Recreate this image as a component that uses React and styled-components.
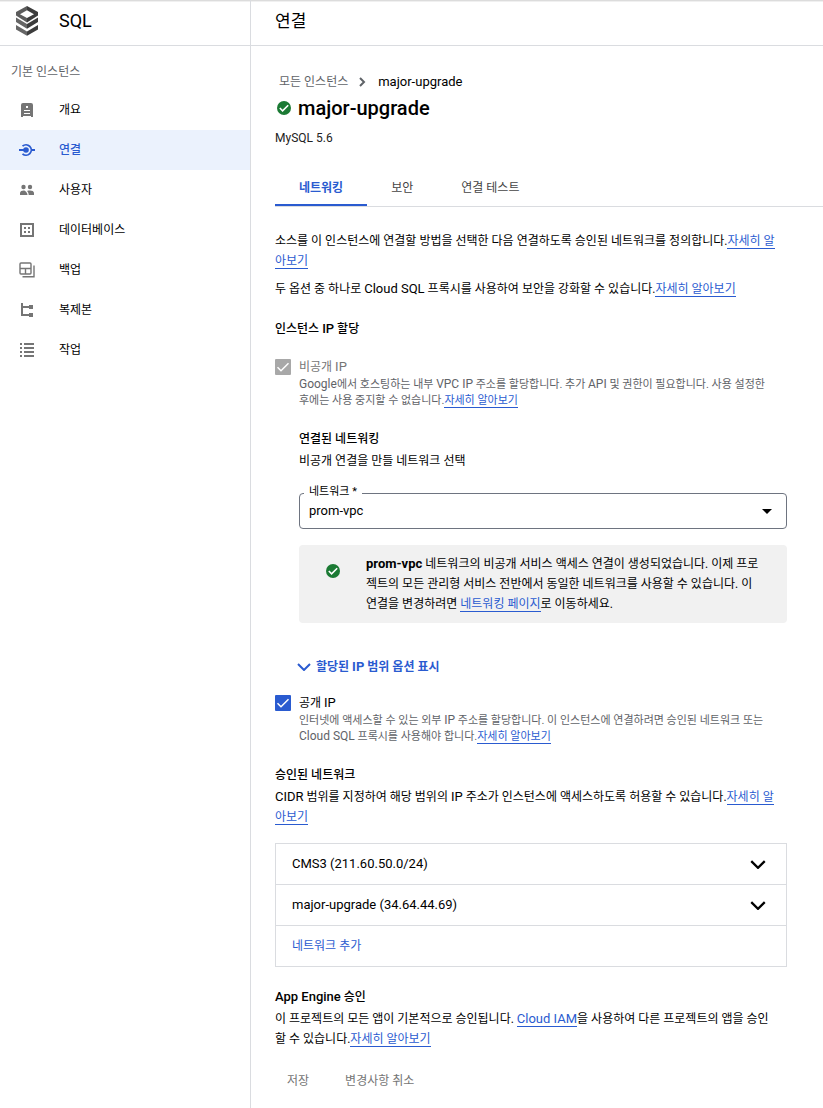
import React, { useState } from 'react';
import styled, { createGlobalStyle } from 'styled-components';

const GlobalStyle = createGlobalStyle`
  *, *::before, *::after { box-sizing: border-box; }
  body {
    margin: 0;
    background: #fff;
    color: #000;
    font-family: Roboto, "Noto Sans CJK KR", sans-serif;
    font-size: 12px;
    line-height: 20px;
  }
  button, select, input { font: inherit; color: inherit; }
`;

const blue = '#2a5bd0';
const line = '#dadce0';

const Shell = styled.div`
  display: grid;
  grid-template-columns: 251px minmax(0, 1fr);
  min-height: 100vh;
  box-shadow: inset 0 1px 0 #dcdcdc, inset 0 2px 0 #f0f0f0;
`;

const Sidebar = styled.aside`
  border-right: 1px solid ${line};
`;

const Bar = styled.header`
  display: flex;
  align-items: center;
  gap: 20px;
  height: 46px;
  padding: 0 ${(p) => (p.$wide ? 24 : 15)}px 4px;
  border-bottom: 1px solid ${line};
`;

const BarTitle = styled.h2`
  margin: 0;
  font-size: ${(p) => (p.$korean ? 17 : 18)}px;
  font-weight: 400;
`;

const NavGroup = styled.p`
  margin: 0;
  padding: 16px 11px 8px;
  color: #5f6368;
`;

const NavLink = styled.a`
  display: flex;
  align-items: center;
  gap: 24px;
  height: 40px;
  padding-left: 19px;
  text-decoration: none;
  font-weight: ${(p) => (p.$active ? 500 : 400)};
  color: ${(p) => (p.$active ? blue : '#000')};
  background: ${(p) => (p.$active ? '#ebf2fd' : 'transparent')};

  svg { color: ${(p) => (p.$active ? blue : '#757575')}; }
`;

const Content = styled.div`
  padding: 26px 36px 18px 24px;
`;

const Latin = styled.span`
  font-size: 13px;
  line-height: 1;
`;

const Crumbs = styled.nav`
  display: flex;
  align-items: baseline;
  gap: 10px;
  padding-left: 4px;

  svg { align-self: center; }
`;

const CrumbLink = styled.a`
  color: #5f6368;
  text-decoration: none;
`;

const TitleRow = styled.div`
  display: flex;
  align-items: center;
  gap: 6px;
  margin: 4px 0 8px;
  padding-left: 1px;
`;

const Title = styled.h1`
  margin: 0;
  font-size: 20px;
  line-height: 24px;
  font-weight: 500;
`;

const Version = styled.p`
  margin: 0;
  color: #222;
`;

const Tabs = styled.div`
  display: flex;
  margin: 19px -36px 24px 0;
  border-bottom: 1px solid ${line};
`;

const Tab = styled.button`
  height: 39px;
  padding: 4px 24px 0;
  border: 0;
  border-bottom: 2px solid ${(p) => (p.$active ? blue : 'transparent')};
  background: none;
  color: ${(p) => (p.$active ? blue : '#444')};
  font-weight: ${(p) => (p.$active ? 700 : 400)};
  cursor: pointer;
`;

const Text = styled.p`
  margin: 0 0 ${(p) => p.$gap || 0}px;
`;

const Heading = styled.h3`
  margin: 0 0 ${(p) => p.$gap || 2}px;
  font-size: 12px;
  font-weight: 500;
`;

const Link = styled.a`
  color: ${blue};
  text-decoration: none;
  border-bottom: 1px solid ${blue};
`;

const Option = styled.div`
  display: grid;
  grid-template-columns: 16px minmax(0, 1fr);
  column-gap: 8px;
  margin-bottom: 20px;
`;

const CheckBox = styled.span`
  display: grid;
  width: 16px;
  height: 16px;
  margin-top: 2px;

  input, svg { grid-area: 1 / 1; }
  svg { pointer-events: none; }
`;

const CheckInput = styled.input`
  appearance: none;
  width: 16px;
  height: 16px;
  margin: 0;
  border: 2px solid #757575;
  border-radius: 1px;

  &:checked { background: ${blue}; border-color: ${blue}; }
  &:disabled { background: #a8a8a8; border-color: #a8a8a8; }
`;

const OptionLabel = styled.label`
  color: ${(p) => (p.$muted ? '#757575' : '#000')};
`;

const Help = styled.p`
  grid-column: 2;
  margin: 0;
  font-size: 11px;
  line-height: 16px;
  color: #5f6368;
`;

const HelpLatin = styled.span`
  font-size: 12px;
  line-height: 1;
`;

const Nested = styled.div`
  margin-left: 24px;
`;

const Field = styled.div`
  display: grid;
  align-items: center;
  position: relative;
  margin: 22px 0 16px;

  select, svg { grid-area: 1 / 1; }
  svg { justify-self: end; margin-right: 15px; pointer-events: none; }
`;

const FieldLabel = styled.label`
  position: absolute;
  top: -8px;
  left: 5px;
  padding: 0 5px;
  background: #fff;
  font-size: 11px;
  line-height: 14px;
`;

const Select = styled.select`
  appearance: none;
  width: 100%;
  height: 36px;
  padding: 0 9px;
  border: 1px solid #6e7480;
  border-radius: 4px;
  background: #fff;
  font-size: 13px;
`;

const Notice = styled.div`
  display: grid;
  grid-template-columns: 41px minmax(0, 1fr);
  padding: 9px 16px 9px 26px;
  border-radius: 4px;
  background: #f1f1f1;

  svg { margin-top: 9px; }
`;

const Expander = styled.button`
  display: flex;
  align-items: center;
  gap: 5px;
  margin: 34px 0 16px -2px;
  padding: 0;
  border: 0;
  background: none;
  color: ${blue};
  font-weight: 700;
  cursor: pointer;
`;

const NetworkList = styled.div`
  margin: 16px 0 20px;
  border: 1px solid ${line};
`;

const NetworkRow = styled.button`
  display: flex;
  align-items: center;
  justify-content: space-between;
  width: 100%;
  height: ${(p) => (p.$add ? 40 : 41)}px;
  padding: 0 20px 0 16px;
  border: 0;
  border-bottom: ${(p) => (p.$add ? 0 : 1)}px solid ${line};
  background: none;
  color: ${(p) => (p.$add ? blue : '#000')};
  font-size: ${(p) => (p.$add ? 12 : 13)}px;
  cursor: pointer;
`;

const Actions = styled.div`
  display: flex;
  gap: 12px;
  margin-top: 14px;
`;

const Action = styled.button`
  height: 36px;
  padding: 0 12px;
  border: 0;
  background: none;
  color: #757575;
`;

const SqlLogo = () => (
  <svg width="24" height="32" viewBox="0 0 24 32" aria-hidden="true">
    <path fill="#5c5c5c" d="M12 1 1 7v3.500l11 7V13L5 9.200l7-4z" />
    <path fill="#3c3c3c" d="M12 1l11 6v3.500l-11 7V13l7-3.800-7-4z" />
    <path fill="#666" d="M1 12.500l11 6.500v4.700L1 17zM1 20l11 6.500v4.300L1 24.500z" />
    <path fill="#3c3c3c" d="M23 12.500L12 19v4.700L23 17zM23 20l-11 6.500v4.300l11-6.300z" />
  </svg>
);

const Icon = ({ children }) => (
  <svg width="16" height="16" viewBox="0 0 16 16" fill="currentColor" aria-hidden="true">
    {children}
  </svg>
);

const icons = {
  overview: (
    <Icon>
      <path fillRule="evenodd" d="M4 1h8a2 2 0 0 1 2 2v12h-2v-1H4v1H2V3a2 2 0 0 1 2-2zm3 3v2h2V4zM5 8v1h6V8zm0 3v1h6v-1z" />
    </Icon>
  ),
  connect: (
    <Icon>
      <circle cx="7" cy="8" r="2.800" />
      <path d="M0 7h5v2H0zM12 7h4v2h-4z" />
      <path d="M3.500 4.200A5.200 5.200 0 1 1 3.500 11.800" fill="none" stroke="currentColor" strokeWidth="1.800" />
    </Icon>
  ),
  users: (
    <Icon>
      <circle cx="4.500" cy="5" r="2.200" />
      <circle cx="11" cy="5" r="2.200" />
      <path d="M1 13v-2c0-1.700 2-2.500 3.700-2.500 1.300 0 3.800 2 3.800 4.500zM9.700 13c0-1.700-.7-3.200-1.700-4 .9-.4 2-.5 3-.5 2 0 4 .8 4 2.500v2z" />
    </Icon>
  ),
  database: (
    <Icon>
      <path fillRule="evenodd" d="M1 1h14v14H1zm2 2v10h10V3zM5 5h2v2H5zm4 0h2v2H9zM5 9h2v2H5zm4 0h2v2H9z" />
    </Icon>
  ),
  backup: (
    <Icon>
      <g fill="none" stroke="currentColor" strokeWidth="1.400">
        <rect x="1" y="1" width="11" height="11" rx="1" />
        <path d="M1 6.500h11M6.500 6.500V12M15 3.500v11.300H3.500" />
      </g>
    </Icon>
  ),
  replica: (
    <Icon>
      <path d="M2 1h2v3h6V3h4v4h-4V6H4v6h6v-1h4v4h-4v-1H2z" />
    </Icon>
  ),
  tasks: (
    <Icon>
      <path d="M1 1h2v2H1zM5 1h10v2H5zM1 5h2v2H1zM5 5h10v2H5zM1 9h2v2H1zM5 9h10v2H5zM1 13h2v2H1zM5 13h10v2H5z" />
    </Icon>
  ),
};

const Success = () => (
  <svg width="16" height="16" viewBox="0 0 16 16" aria-hidden="true">
    <circle cx="8" cy="8" r="7" fill="#1b7a34" />
    <path d="M3.800 8l2.800 2.800 5.600-5.600" fill="none" stroke="#fff" strokeWidth="1.600" />
  </svg>
);

const Chevron = ({ width = 14, height = 8 }) => (
  <svg width={width} height={height} viewBox="0 0 14 8" fill="none" stroke="currentColor" strokeWidth="2" aria-hidden="true">
    <path d="M1 1l6 6 6-6" />
  </svg>
);

const Check = ({ id, ...rest }) => (
  <CheckBox>
    <CheckInput type="checkbox" id={id} {...rest} />
    <svg width="16" height="16" viewBox="0 0 16 16" fill="none" stroke="#fff" strokeWidth="1.500" aria-hidden="true">
      <path d="M2.500 8.300l3.500 3.500 7.500-7.500" />
    </svg>
  </CheckBox>
);

const navItems = [
  ['overview', '개요'],
  ['connect', '연결'],
  ['users', '사용자'],
  ['database', '데이터베이스'],
  ['backup', '백업'],
  ['replica', '복제본'],
  ['tasks', '작업'],
];

const tabItems = ['네트워킹', '보안', '연결 테스트'];
const networks = ['CMS3 (211.60.50.0/24)', 'major-upgrade (34.64.44.69)'];

export default function App() {
  const [tab, setTab] = useState(0);

  return (
    <>
      <GlobalStyle />
      <Shell>
        <Sidebar>
          <Bar>
            <SqlLogo />
            <BarTitle>SQL</BarTitle>
          </Bar>
          <NavGroup>기본 인스턴스</NavGroup>
          <nav>
            {navItems.map(([key, label]) => (
              <NavLink key={key} href="#" $active={key === 'connect'}>
                {icons[key]}
                {label}
              </NavLink>
            ))}
          </nav>
        </Sidebar>

        <main>
          <Bar $wide>
            <BarTitle $korean>연결</BarTitle>
          </Bar>
          <Content>
            <Crumbs>
              <CrumbLink href="#">모든 인스턴스</CrumbLink>
              <svg width="10" height="12" viewBox="0 0 10 12" fill="none" stroke="#5f6368" strokeWidth="2" aria-hidden="true">
                <path d="M2 2l4 4-4 4" />
              </svg>
              <Latin>major-upgrade</Latin>
            </Crumbs>
            <TitleRow>
              <Success />
              <Title>major-upgrade</Title>
            </TitleRow>
            <Version>MySQL 5.6</Version>

            <Tabs role="tablist">
              {tabItems.map((label, i) => (
                <Tab key={label} role="tab" aria-selected={tab === i} $active={tab === i} onClick={() => setTab(i)}>
                  {label}
                </Tab>
              ))}
            </Tabs>

            <Text $gap={8}>
              소스를 이 인스턴스에 연결할 방법을 선택한 다음 연결하도록 승인된 네트워크를 정의합니다.
              <Link href="#">자세히 알<br />아보기</Link>
            </Text>
            <Text $gap={20}>
              두 옵션 중 하나로 <Latin>Cloud SQL</Latin> 프록시를 사용하여 보안을 강화할 수 있습니다.
              <Link href="#">자세히 알아보기</Link>
            </Text>

            <Heading $gap={18}>인스턴스 <Latin>IP</Latin> 할당</Heading>
            <Option>
              <Check id="private-ip" defaultChecked disabled />
              <OptionLabel htmlFor="private-ip" $muted>비공개 <Latin>IP</Latin></OptionLabel>
              <Help>
                <HelpLatin>Google</HelpLatin>에서 호스팅하는 내부 <HelpLatin>VPC IP</HelpLatin> 주소를 할당합니다. 추가 <HelpLatin>API</HelpLatin> 및 권한이 필요합니다. 사용 설정한<br />
                후에는 사용 중지할 수 없습니다.<Link href="#">자세히 알아보기</Link>
              </Help>
            </Option>

            <Nested>
              <Heading>연결된 네트워킹</Heading>
              <Text>비공개 연결을 만들 네트워크 선택</Text>
              <Field>
                <FieldLabel htmlFor="network">네트워크 *</FieldLabel>
                <Select id="network" defaultValue="prom-vpc">
                  <option>prom-vpc</option>
                </Select>
                <svg width="10" height="5" viewBox="0 0 10 5" aria-hidden="true">
                  <path d="M0 0h10L5 5z" />
                </svg>
              </Field>
              <Notice>
                <Success />
                <Text>
                  <Latin as="b">prom-vpc</Latin> 네트워크의 비공개 서비스 액세스 연결이 생성되었습니다. 이제 프로<br />
                  젝트의 모든 관리형 서비스 전반에서 동일한 네트워크를 사용할 수 있습니다. 이<br />
                  연결을 변경하려면 <Link href="#">네트워킹 페이지</Link>로 이동하세요.
                </Text>
              </Notice>
              <Expander>
                <Chevron />
                <span>할당된 <Latin>IP</Latin> 범위 옵션 표시</span>
              </Expander>
            </Nested>

            <Option>
              <Check id="public-ip" defaultChecked />
              <OptionLabel htmlFor="public-ip">공개 <Latin>IP</Latin></OptionLabel>
              <Help>
                인터넷에 액세스할 수 있는 외부 <HelpLatin>IP</HelpLatin> 주소를 할당합니다. 이 인스턴스에 연결하려면 승인된 네트워크 또는<br />
                <HelpLatin>Cloud SQL</HelpLatin> 프록시를 사용해야 합니다.<Link href="#">자세히 알아보기</Link>
              </Help>
            </Option>

            <Heading>승인된 네트워크</Heading>
            <Text>
              <Latin>CIDR</Latin> 범위를 지정하여 해당 범위의 <Latin>IP</Latin> 주소가 인스턴스에 액세스하도록 허용할 수 있습니다.
              <Link href="#">자세히 알<br />아보기</Link>
            </Text>

            <NetworkList>
              {networks.map((name) => (
                <NetworkRow key={name}>
                  {name}
                  <Chevron width={16} height={9} />
                </NetworkRow>
              ))}
              <NetworkRow $add>네트워크 추가</NetworkRow>
            </NetworkList>

            <Heading><Latin>App Engine</Latin> 승인</Heading>
            <Text>
              이 프로젝트의 모든 앱이 기본적으로 승인됩니다. <Link href="#"><Latin>Cloud IAM</Latin></Link>을 사용하여 다른 프로젝트의 앱을 승인<br />
              할 수 있습니다.<Link href="#">자세히 알아보기</Link>
            </Text>

            <Actions>
              <Action disabled>저장</Action>
              <Action disabled>변경사항 취소</Action>
            </Actions>
          </Content>
        </main>
      </Shell>
    </>
  );
}
